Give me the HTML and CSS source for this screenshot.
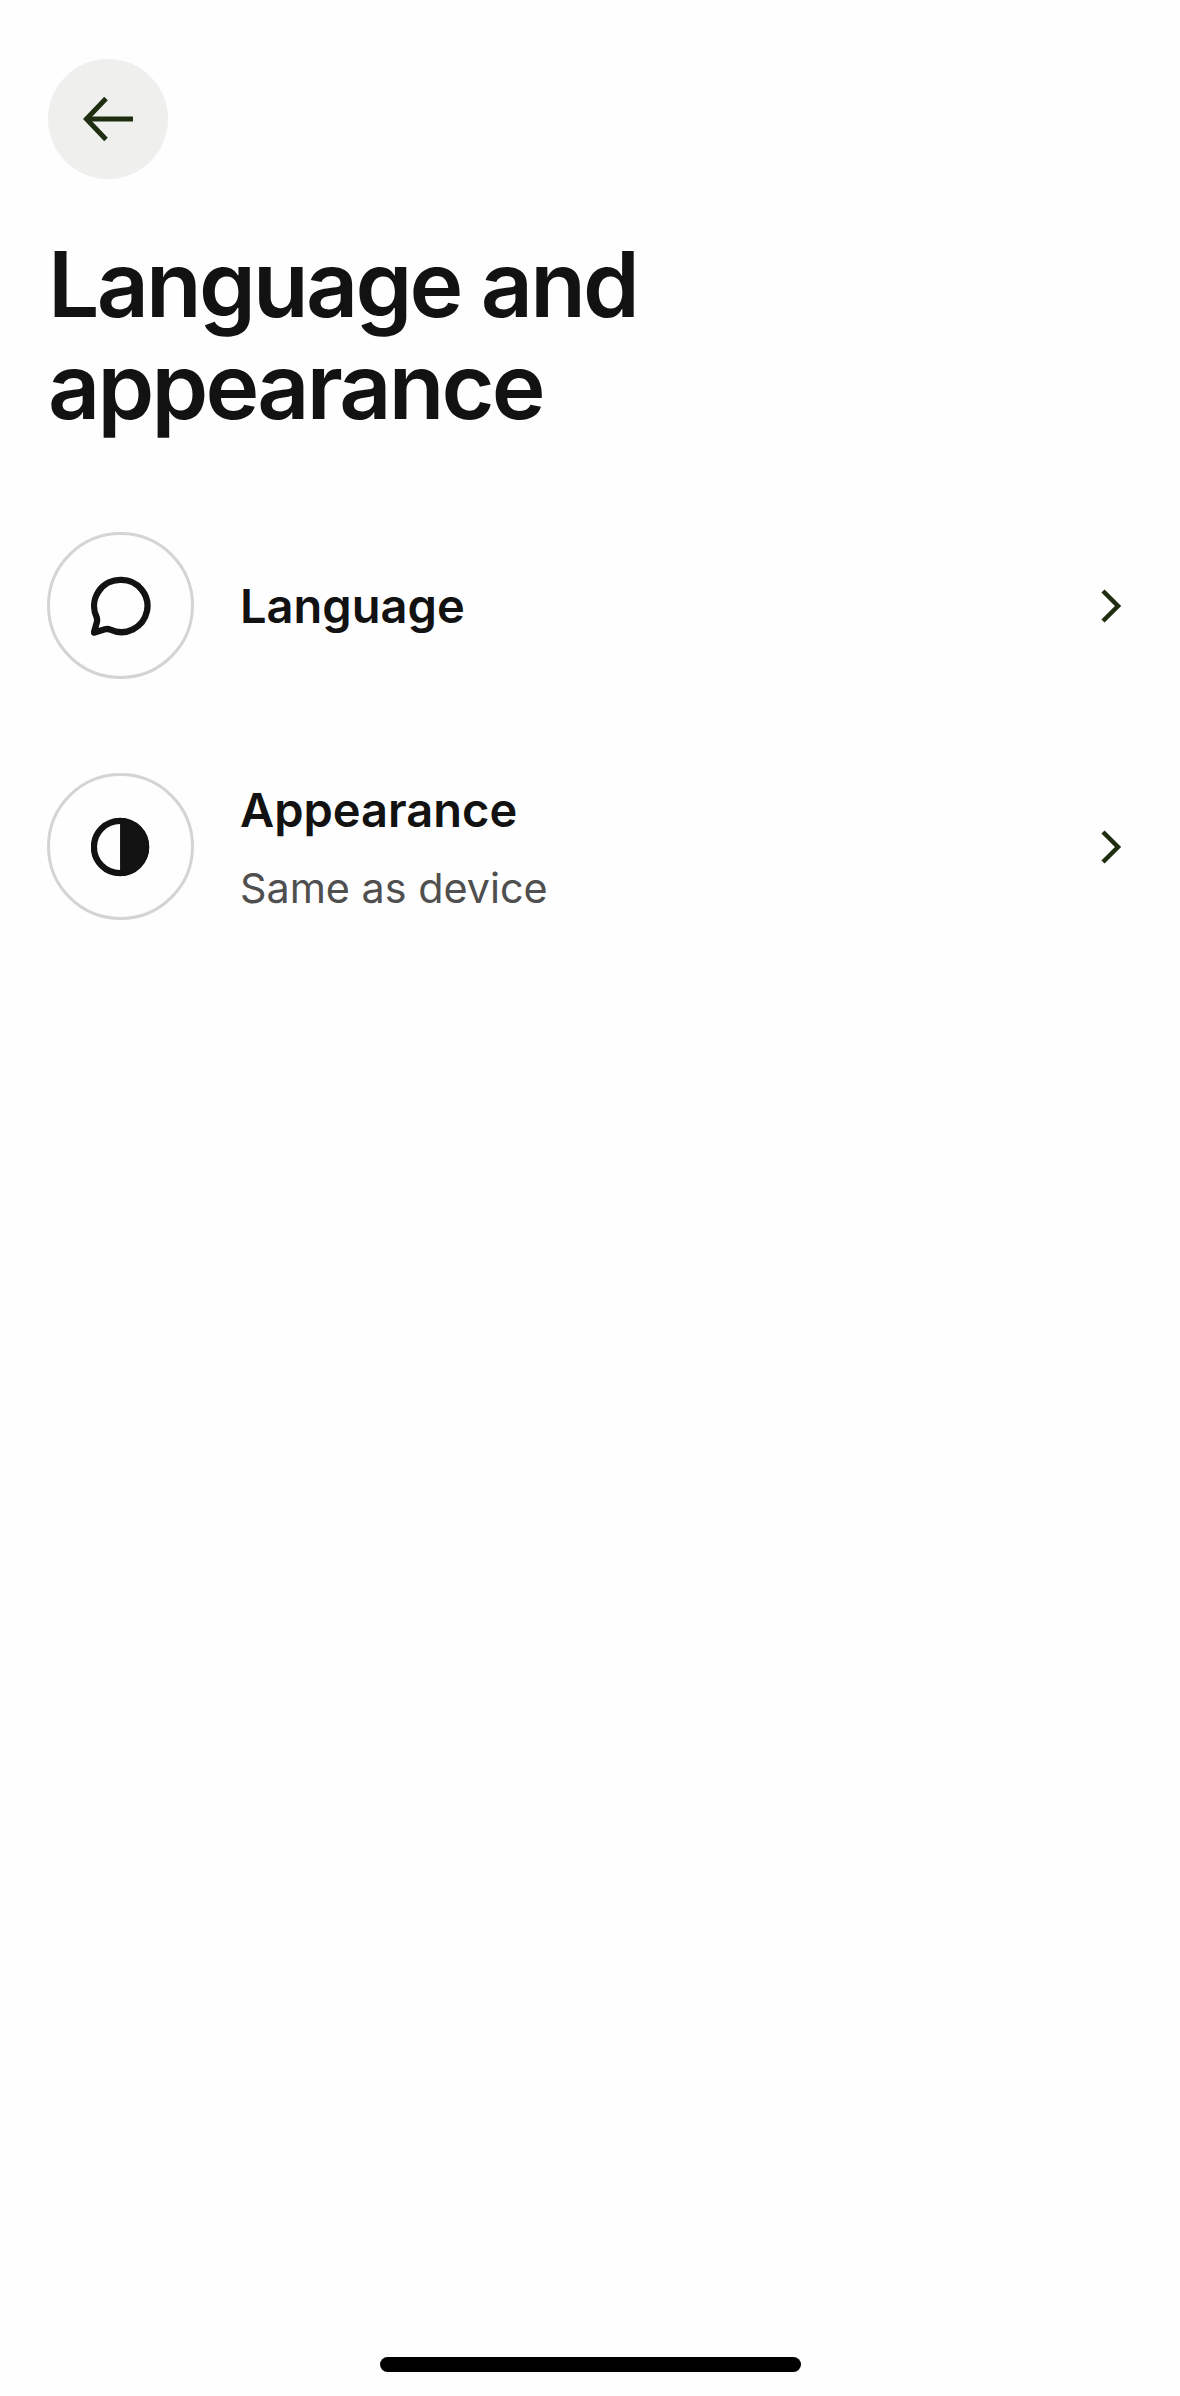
FILE: index.html
```html
<!DOCTYPE html>
<html lang="en">
<head>
  <meta charset="UTF-8">
  <meta name="viewport" content="width=device-width, initial-scale=1.0">
  <title>Language and appearance</title>
  <link rel="stylesheet" href="styles.css">
</head>
<body>
  <div class="screen">
    <button class="back-button" type="button" aria-label="Back">
      <svg width="60" height="60" viewBox="0 0 60 60" fill="none" stroke="#1f2d10" stroke-width="5">
        <path d="M55 30H9"/>
        <path d="M28 9.500L8.500 30 28 50.500"/>
      </svg>
    </button>

    <h1>Language and appearance</h1>

    <div class="settings-list">
      <a class="settings-row" href="#">
        <span class="row-icon">
          <svg width="60" height="60" viewBox="1 0 62 62" fill="none" stroke="#121212" stroke-width="6.500" stroke-linejoin="round">
            <path d="M32 4a27 27 0 1 1-11 51.500c-2-1-3.500-1-5.500-.4L4 58.500l3-10.500c.6-2 .5-3-.2-5.500A27 27 0 0 1 32 4z"/>
          </svg>
        </span>
        <span class="row-text">
          <span class="row-title">Language</span>
        </span>
        <svg class="chevron" width="26" height="40" viewBox="0 0 26 40" fill="none" stroke="#1f2d10" stroke-width="4.500">
          <path d="M4 5l15 15L4 35"/>
        </svg>
      </a>

      <a class="settings-row" href="#">
        <span class="row-icon">
          <svg width="60" height="60" viewBox="1 0 62 62">
            <circle cx="31" cy="31" r="27" fill="none" stroke="#121212" stroke-width="6.500"/>
            <path d="M31 1a30 30 0 0 1 0 60z" fill="#121212"/>
          </svg>
        </span>
        <span class="row-text">
          <span class="row-title">Appearance</span>
          <span class="row-subtitle">Same as device</span>
        </span>
        <svg class="chevron" width="26" height="40" viewBox="0 0 26 40" fill="none" stroke="#1f2d10" stroke-width="4.500">
          <path d="M4 5l15 15L4 35"/>
        </svg>
      </a>
    </div>

    <div class="home-indicator"></div>
  </div>
</body>
</html>
```

FILE: styles.css
```css
html, body {
  margin: 0;
  padding: 0;
}
body {
  font-family: 'Inter', 'Liberation Sans', sans-serif;
  background: #fefefe;
  color: #121212;
}
.screen {
  display: flex;
  flex-direction: column;
  box-sizing: border-box;
  height: 2396px;
  padding: 59px 0 24px 48px;
}
.back-button {
  display: flex;
  justify-content: center;
  align-items: center;
  flex: none;
  width: 120px;
  height: 120px;
  padding: 0;
  border: none;
  border-radius: 50%;
  background: #eff0ee;
}
h1 {
  width: 800px;
  margin: 54px 0 0;
  font-size: 91px;
  font-weight: 600;
  line-height: 102px;
  letter-spacing: -2.800px;
}
.settings-list {
  display: flex;
  flex-direction: column;
  gap: 94px;
  margin-top: 95px;
}
.settings-row {
  display: flex;
  align-items: center;
  height: 147px;
  margin-left: -1px;
  padding-right: 55px;
  color: inherit;
  text-decoration: none;
}
.row-icon {
  display: flex;
  justify-content: center;
  align-items: center;
  flex: none;
  box-sizing: border-box;
  width: 147px;
  height: 147px;
  border: 3px solid #d4d4d4;
  border-radius: 50%;
}
.row-text {
  display: flex;
  flex-direction: column;
  flex: 1;
  gap: 24px;
  margin-left: 46px;
}
.row-title {
  font-size: 47px;
  font-weight: 600;
  line-height: 58px;
}
.row-subtitle {
  font-size: 41.300px;
  line-height: 50px;
  color: #4f4f4f;
}
.chevron {
  flex: none;
}
.home-indicator {
  flex: none;
  align-self: center;
  width: 421px;
  height: 15px;
  margin: auto 0 0 -48px;
  border-radius: 8px;
  background: #000;
}
```
